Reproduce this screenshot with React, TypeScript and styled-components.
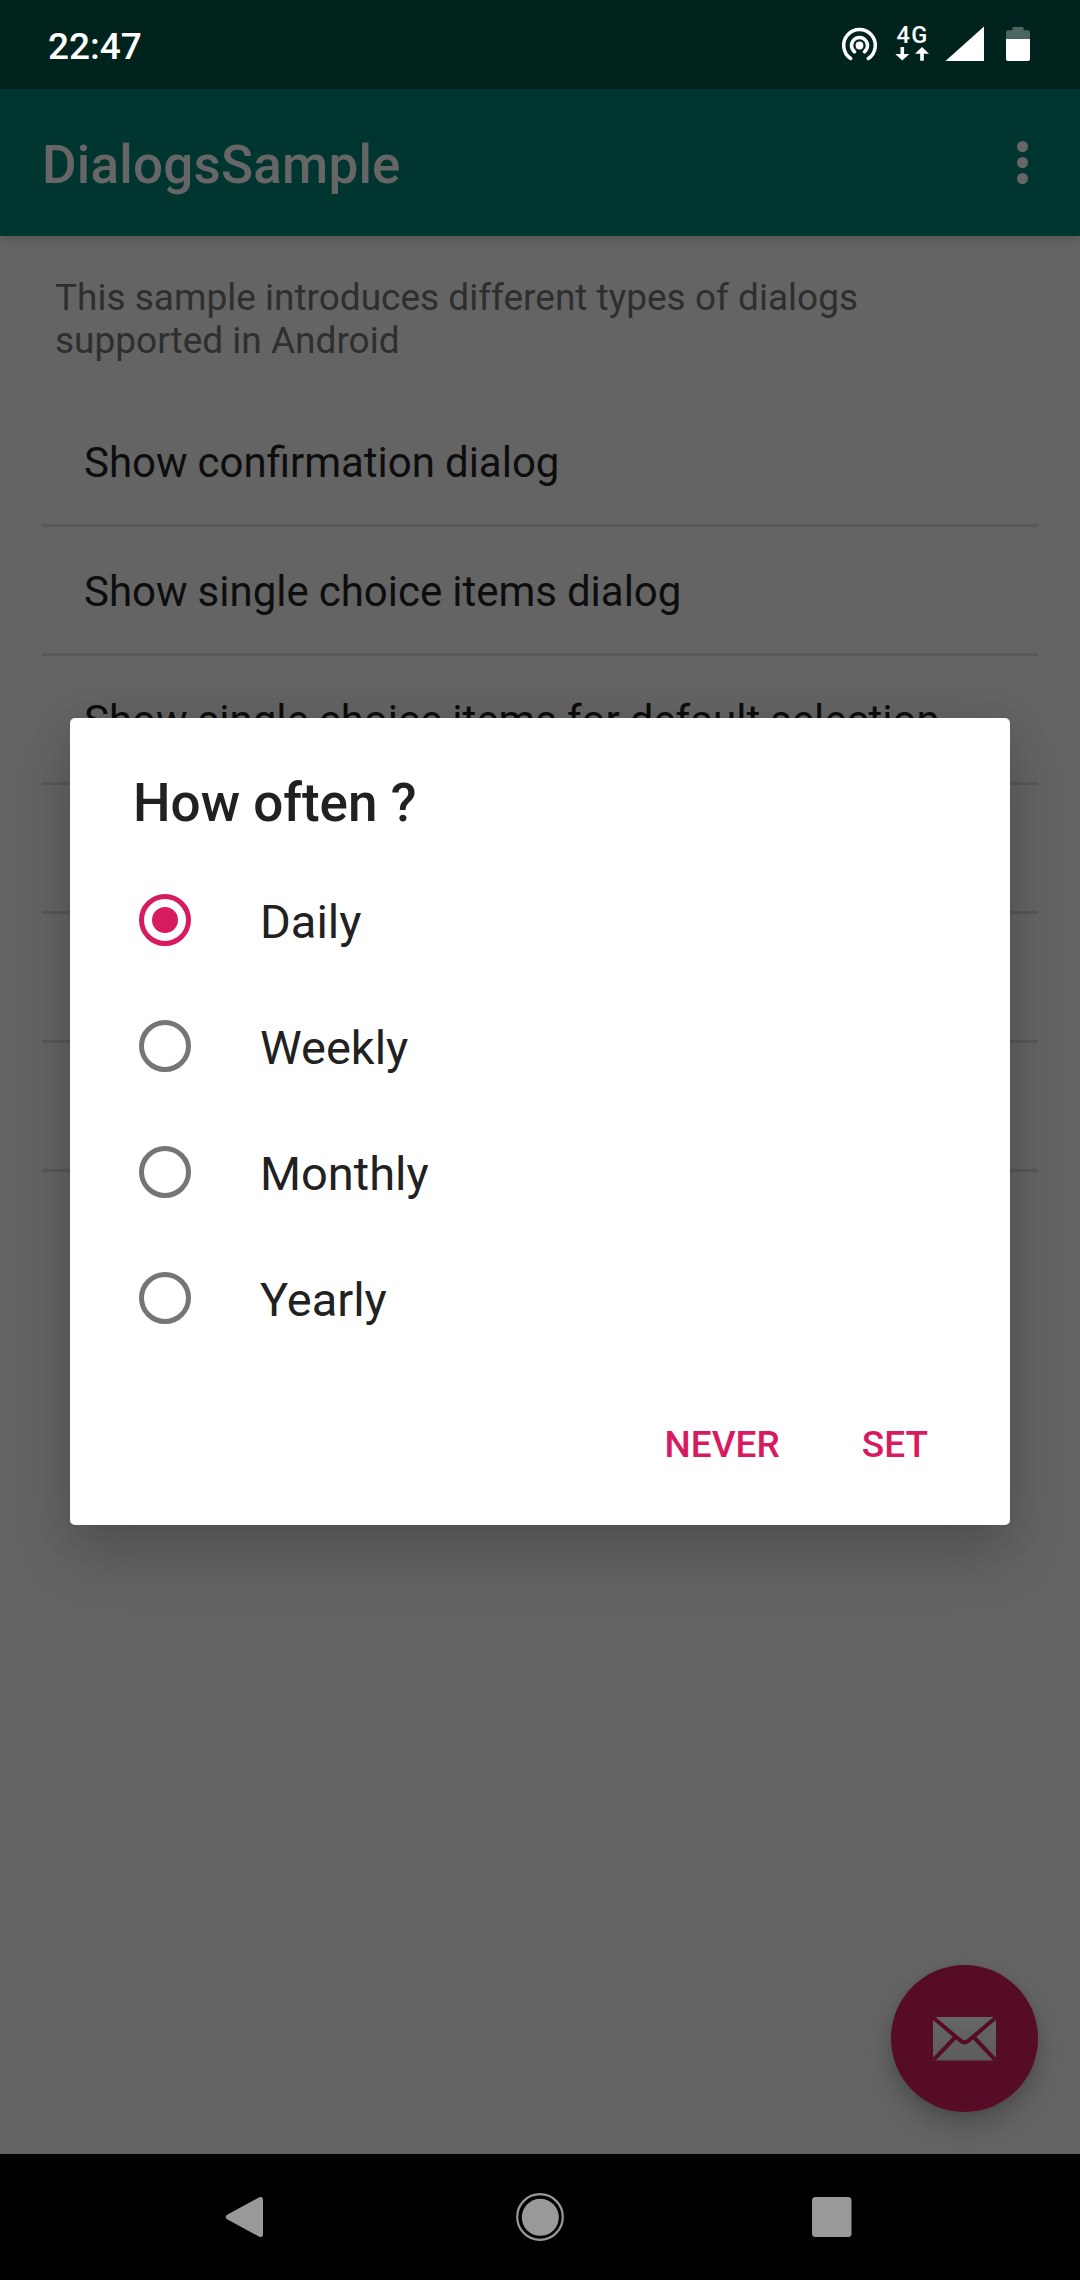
import React, { useState } from "react";
import styled, { createGlobalStyle } from "styled-components";

const GlobalStyle = createGlobalStyle`
  *, *::before, *::after { box-sizing: border-box; }
  body { margin: 0; background: #000; font-family: Roboto, "Noto Sans", sans-serif; }
  button { font: inherit; border: 0; background: none; padding: 0; margin: 0; text-align: left; }
  svg { display: block; }
`;

const Screen = styled.div`
  position: relative;
  display: flex;
  flex-direction: column;
  width: 1080px;
  height: 2280px;
  overflow: hidden;
  background: #646464;
`;

const StatusBar = styled.header`
  display: flex;
  align-items: center;
  justify-content: space-between;
  height: 89px;
  padding: 2px 50px 0 48px;
  background: #00231e;
  color: #fff;
`;

const Clock = styled.time`
  padding-top: 2px;
  font-size: 37px;
  font-weight: 500;
  line-height: 44px;
`;

const StatusIcons = styled.svg`
  width: 190px;
  height: 49px;
`;

const AppBar = styled.div`
  display: flex;
  flex-shrink: 0;
  align-items: center;
  justify-content: space-between;
  height: 147px;
  padding: 0 42px;
  background: #003530;
  color: #666;
  box-shadow: 0 3px 10px rgba(0, 0, 0, 0.16);
  z-index: 1;
`;

const AppTitle = styled.h1`
  margin: 4px 0 0;
  font-size: 53px;
  font-weight: 500;
  line-height: 62px;
  letter-spacing: 0.2px;
`;

const MenuButton = styled.button`
  display: flex;
  flex-direction: column;
  align-items: center;
  gap: 5px;
  width: 31px;
`;

const Dot = styled.span`
  width: 10.8px;
  height: 10.8px;
  border-radius: 50%;
  background: #666;
`;

const Content = styled.main`
  display: flex;
  flex: 1;
  flex-direction: column;
  padding: 40px 42px 0;
`;

const Intro = styled.p`
  margin: 0 0 36px;
  padding-left: 13px;
  width: 900px;
  font-size: 37px;
  line-height: 43px;
  color: #2e2e2e;
`;

const SampleList = styled.ul`
  margin: 0;
  padding: 0;
  list-style: none;
`;

const SampleItem = styled.li`
  display: flex;
  align-items: center;
  height: 129px;
  padding: 3px 42px 0;
  border-bottom: 3px solid #585858;
  font-size: 42px;
  line-height: 49px;
  word-spacing: -0.45px;
  color: #0d0d0d;
  white-space: nowrap;
`;

const Fab = styled.button`
  position: absolute;
  right: 42px;
  bottom: 168px;
  display: flex;
  align-items: center;
  justify-content: center;
  width: 147px;
  height: 147px;
  border-radius: 50%;
  background: #560b26;
  box-shadow: 0 14px 26px rgba(0, 0, 0, 0.22), 0 2px 10px rgba(0, 0, 0, 0.08);
`;

const NavBar = styled.nav`
  position: relative;
  display: flex;
  flex-shrink: 0;
  align-items: center;
  justify-content: space-between;
  height: 126px;
  padding: 0 216px;
  background: #000;
`;

const NavButton = styled.button`
  width: 64px;
  height: 64px;
`;

const Dialog = styled.section`
  position: absolute;
  top: 718px;
  left: 70px;
  z-index: 2;
  display: flex;
  flex-direction: column;
  width: 940px;
  height: 807px;
  border-radius: 5px;
  background: #fff;
  color: #212121;
  box-shadow: 0 34px 58px rgba(0, 0, 0, 0.16), 0 4px 44px rgba(0, 0, 0, 0.1);
`;

const DialogTitle = styled.h2`
  margin: 0;
  padding: 54px 63px 0;
  font-size: 53px;
  font-weight: 500;
  line-height: 62px;
`;

const Options = styled.div`
  display: flex;
  flex-direction: column;
  padding-top: 23px;
`;

const Option = styled.button`
  display: flex;
  align-items: center;
  gap: 69px;
  height: 126px;
  padding-left: 69px;
`;

const Radio = styled.span<{ $on: boolean }>`
  display: flex;
  align-items: center;
  justify-content: center;
  width: 52px;
  height: 52px;
  border: 5px solid ${(p) => (p.$on ? "#d81b60" : "#757575")};
  border-radius: 50%;

  &::after {
    content: "";
    width: 26px;
    height: 26px;
    border-radius: 50%;
    background: ${(p) => (p.$on ? "#d81b60" : "transparent")};
  }
`;

const OptionLabel = styled.span`
  padding-top: 4px;
  font-size: 47px;
  line-height: 56px;
  color: #212121;
`;

const Actions = styled.div`
  display: flex;
  justify-content: flex-end;
  gap: 82px;
  margin-top: 62px;
  padding-right: 82px;
`;

const Action = styled.button`
  font-size: 37px;
  font-weight: 500;
  line-height: 43px;
  color: #d81b60;
`;

const samples = [
  "Show confirmation dialog",
  "Show single choice items dialog",
  "Show single choice items for default selection",
  "",
  "",
  "",
];

const choices = ["Daily", "Weekly", "Monthly", "Yearly"];

function StatusGlyphs() {
  return (
    <StatusIcons viewBox="840 21 190 49">
      <g fill="none" stroke="#fff" strokeWidth="3.5" strokeLinecap="round">
        <path d="M850.7 58.5 A15.8 15.8 0 1 1 868.3 58.5" />
        <path d="M854.6 51.8 A8 8 0 1 1 864.4 51.8" />
      </g>
      <circle cx="859.5" cy="45.5" r="3.9" fill="#fff" />
      <text x="896.5" y="43" fill="#fff" fontFamily="Roboto, sans-serif" fontSize="23.5" fontWeight="500" letterSpacing="1.4">4G</text>
      <path fill="#fff" d="M900.5 47h3.6v7h5.2l-7 6.6-7-6.6h5.2z" />
      <path fill="#fff" d="M920.2 60.8h3.6v-7h5.2l-7-6.8-7 6.8h5.2z" />
      <path fill="#fff" d="M945.5 61H984V26.5z" />
      <path fill="#4c6561" d="M1012.5 27h11v3.2h4.5q2 0 2 2V39h-24v-6.8q0-2 2-2h4.5z" />
      <path fill="#fff" d="M1006 39h24v20q0 2-2 2h-20q-2 0-2-2z" />
    </StatusIcons>
  );
}

function MailGlyph() {
  return (
    <svg width="63" height="44" viewBox="0 0 63 44">
      <defs>
        <linearGradient id="mail" x1="0" y1="0" x2="0" y2="1">
          <stop offset="0" stopColor="#666" />
          <stop offset="1" stopColor="#5c5c5c" />
        </linearGradient>
      </defs>
      <rect width="63" height="43.5" fill="url(#mail)" />
      <g fill="none" stroke="#560b26" strokeWidth="4">
        <path d="M0 0.5 27 23.3Q31.5 27.5 36 23.3L63 0.5" />
        <path d="M0.5 43 22 20.5M62.5 43 41 20.5" />
      </g>
    </svg>
  );
}

export default function App() {
  const [selected, setSelected] = useState("Daily");
  return (
    <>
      <GlobalStyle />
      <Screen>
        <StatusBar>
          <Clock>22:47</Clock>
          <StatusGlyphs />
        </StatusBar>
        <AppBar>
          <AppTitle>DialogsSample</AppTitle>
          <MenuButton aria-label="More options">
            <Dot />
            <Dot />
            <Dot />
          </MenuButton>
        </AppBar>
        <Content>
          <Intro>This sample introduces different types of dialogs supported in Android</Intro>
          <SampleList>
            {samples.map((label, i) => (
              <SampleItem key={i}>{label}</SampleItem>
            ))}
          </SampleList>
        </Content>
        <Fab aria-label="Send mail">
          <MailGlyph />
        </Fab>
        <NavBar>
          <NavButton aria-label="Back">
            <svg width="64" height="64" viewBox="0 0 64 64">
              <path d="M44.5 14.5V49.5L12.3 32z" fill="#999" stroke="#999" strokeWidth="5" strokeLinejoin="round" />
            </svg>
          </NavButton>
          <NavButton aria-label="Home">
            <svg width="64" height="64" viewBox="0 0 64 64">
              <circle cx="32" cy="32" r="22.8" fill="none" stroke="#999" strokeWidth="2.2" />
              <circle cx="32.3" cy="32.3" r="18.5" fill="#999" />
            </svg>
          </NavButton>
          <NavButton aria-label="Recents">
            <svg width="64" height="64" viewBox="0 0 64 64">
              <rect x="12" y="12" width="39.5" height="40" rx="3.5" fill="#999" />
            </svg>
          </NavButton>
        </NavBar>
        <Dialog role="dialog">
          <DialogTitle>How often ?</DialogTitle>
          <Options role="radiogroup">
            {choices.map((choice) => (
              <Option key={choice} role="radio" aria-checked={choice === selected} onClick={() => setSelected(choice)}>
                <Radio $on={choice === selected} />
                <OptionLabel>{choice}</OptionLabel>
              </Option>
            ))}
          </Options>
          <Actions>
            <Action>NEVER</Action>
            <Action>SET</Action>
          </Actions>
        </Dialog>
      </Screen>
    </>
  );
}
